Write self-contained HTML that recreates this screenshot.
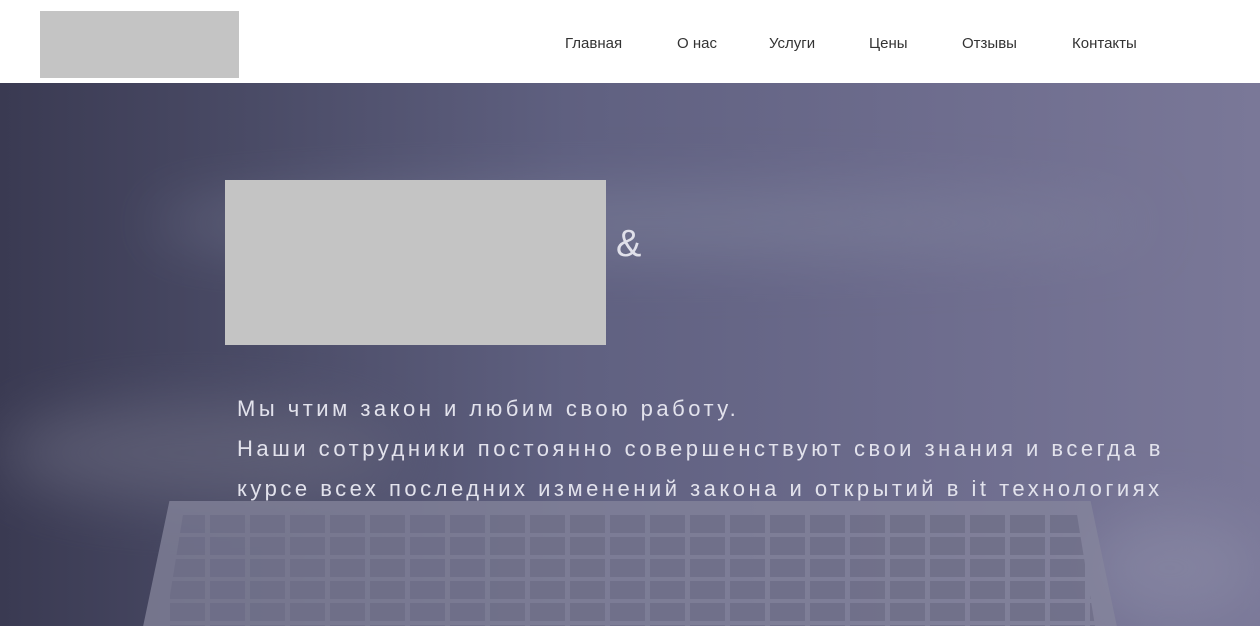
<!DOCTYPE html>
<html><head><meta charset="utf-8"><style>
*{margin:0;padding:0;box-sizing:border-box}
body{width:1260px;height:626px;overflow:hidden;font-family:"Liberation Sans",sans-serif;background:#fff;position:relative}
.hdr{position:absolute;left:0;top:0;width:1260px;height:83px;background:#fff}
.logo{position:absolute;left:40px;top:11px;width:199px;height:67px;background:#c4c4c4}
.nav a{position:absolute;top:35px;font-size:15px;color:#333;text-decoration:none}
.hero{position:absolute;left:0;top:83px;width:1260px;height:543px;overflow:hidden;
background:linear-gradient(90deg,#3a3a52 0%,#4a4b66 20%,#5f6080 45%,#6e6d8e 75%,#7a7898 100%)}
.blob{position:absolute;border-radius:50%;filter:blur(30px)}
.kb{position:absolute;left:140px;top:418px;width:980px;height:140px;background:#85859c;clip-path:polygon(3% 0,97% 0,100% 100%,0 100%);opacity:.75}
.keys{position:absolute;left:165px;top:428px;width:930px;height:115px;
background:repeating-linear-gradient(90deg,transparent 0 5px,#6c6c86 5px 40px);
-webkit-mask:repeating-linear-gradient(180deg,transparent 0 4px,#000 4px 22px);opacity:.75;clip-path:polygon(2% 0,98% 0,100% 100%,0 100%)}
.img{position:absolute;left:225px;top:97px;width:381px;height:165px;background:#c4c4c4}
.amp{position:absolute;left:616px;top:140px;font-size:38px;color:#e0e0ea;font-weight:300}
.txt{position:absolute;left:237px;top:306px;font-size:22px;line-height:40px;color:#e2e2ec;letter-spacing:3.5px;white-space:nowrap}
</style></head><body>
<div class="hdr"><div class="logo"></div>
<div class="nav"><a style="left:565px">Главная</a><a style="left:677px">О нас</a><a style="left:769px">Услуги</a><a style="left:869px">Цены</a><a style="left:962px">Отзывы</a><a style="left:1072px">Контакты</a></div></div>
<div class="hero">
<div class="blob" style="left:150px;top:110px;width:1000px;height:60px;background:#8488a0;opacity:.5"></div>
<div class="blob" style="left:0;top:320px;width:400px;height:100px;background:#6a6a80;opacity:.6"></div>
<div class="blob" style="left:1080px;top:430px;width:180px;height:110px;background:#9090aa;opacity:.5"></div>
<div class="kb"></div>
<div class="keys"></div>
<div class="img"></div>
<div class="amp">&amp;</div>
<div class="txt">Мы чтим закон и любим свою работу.<br>Наши сотрудники постоянно совершенствуют свои знания и всегда в<br>курсе всех последних изменений закона и открытий в it технологиях</div>
</div>
</body></html>
